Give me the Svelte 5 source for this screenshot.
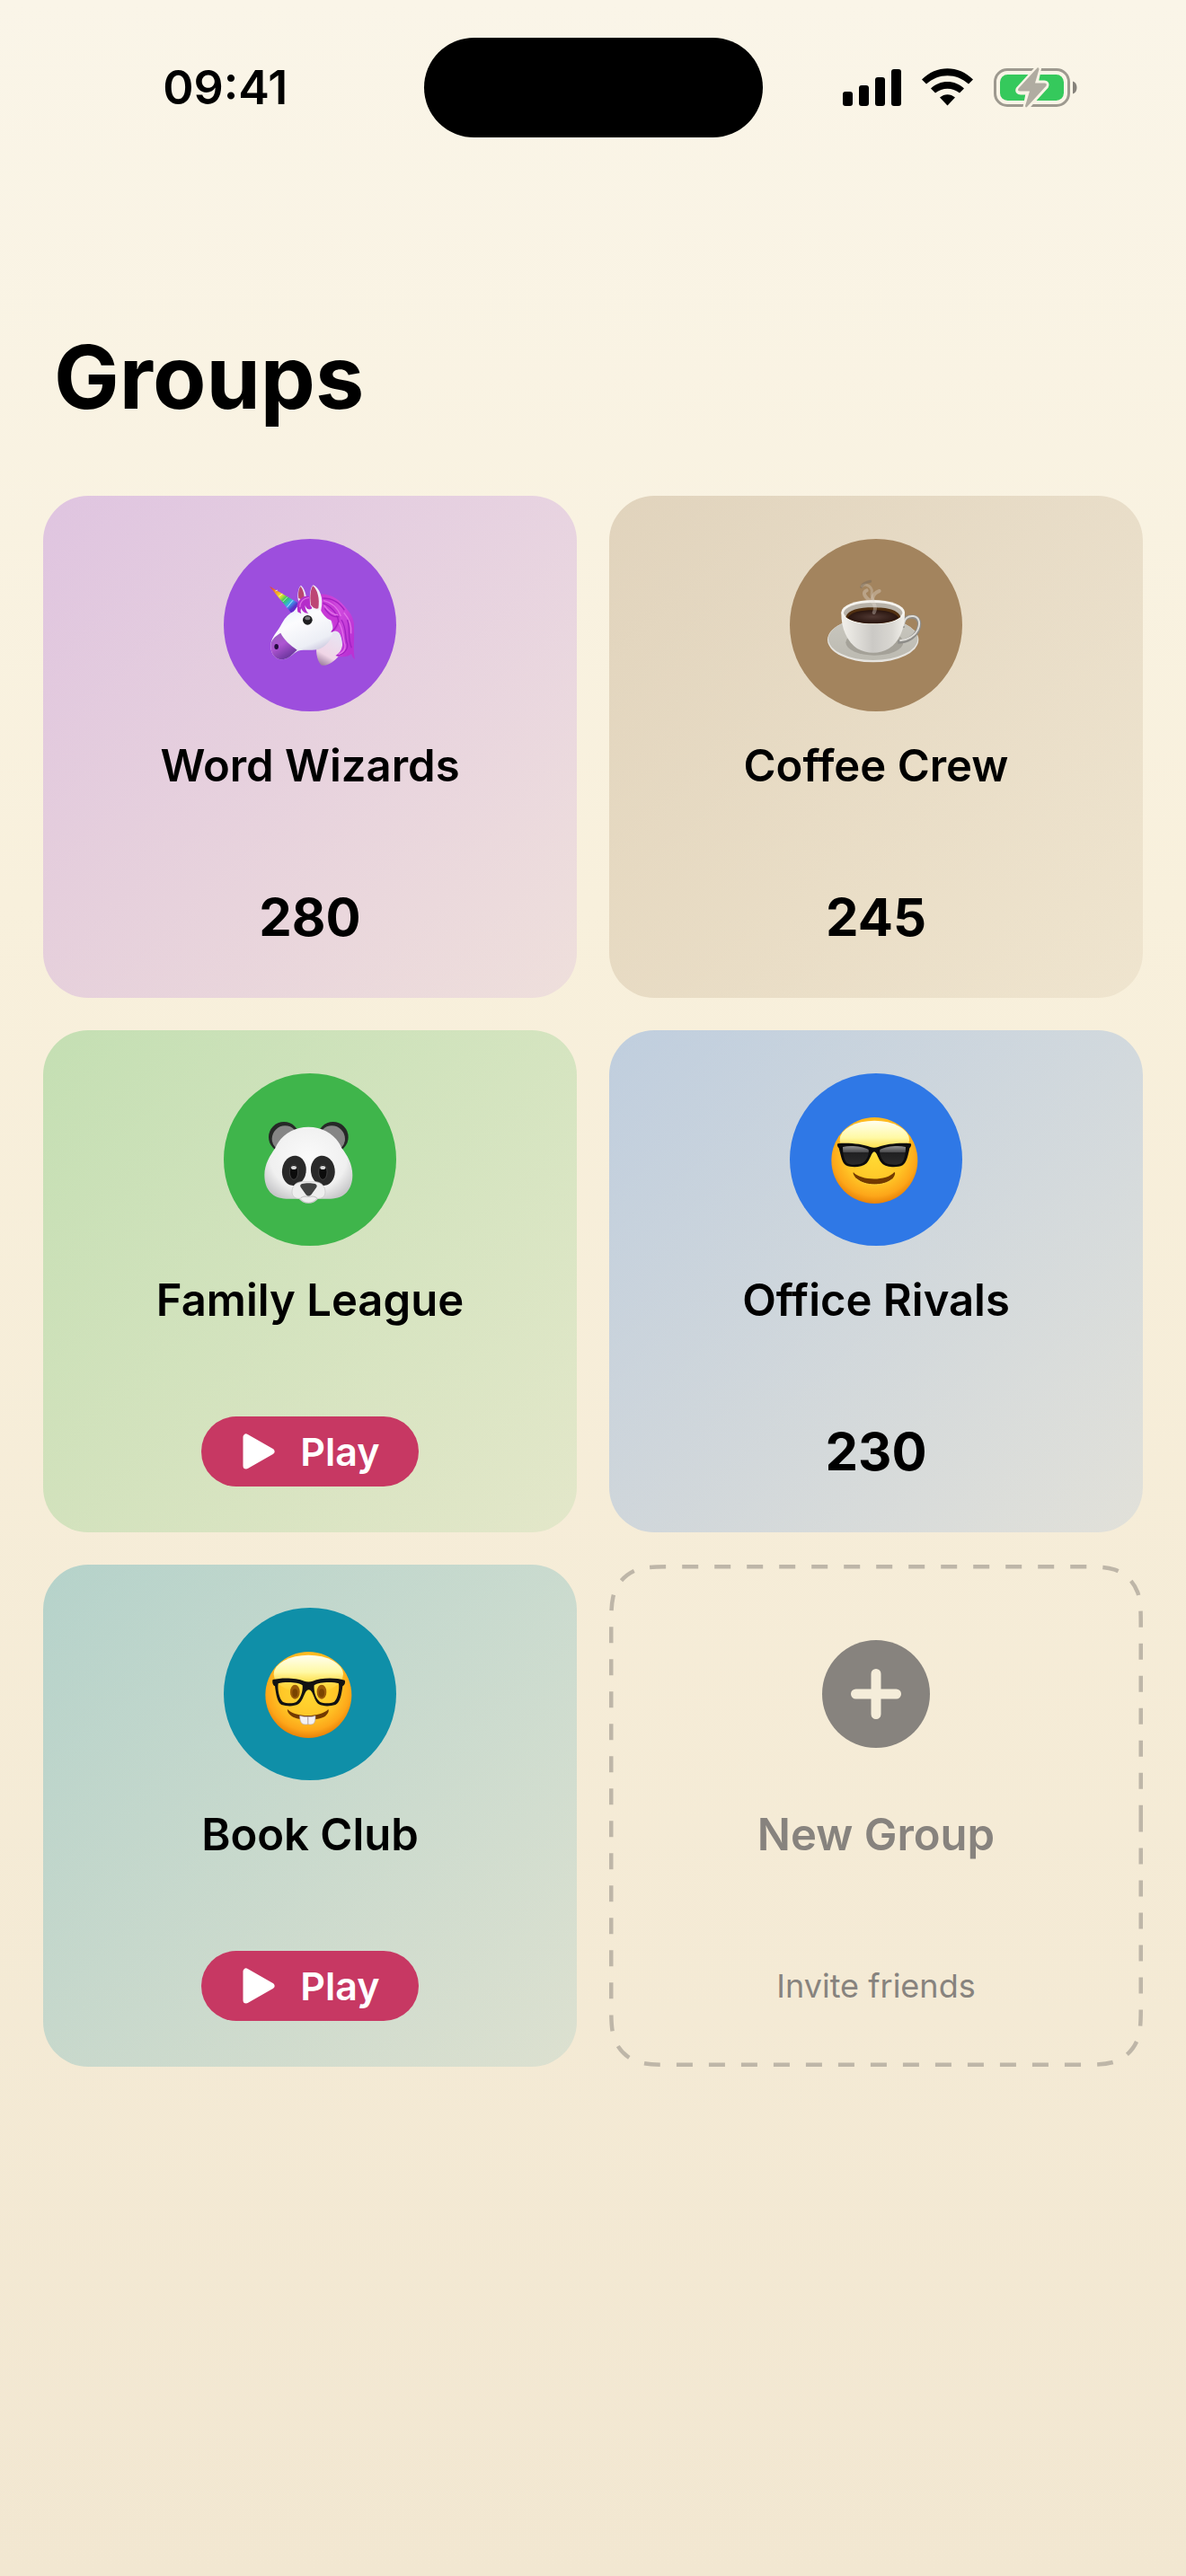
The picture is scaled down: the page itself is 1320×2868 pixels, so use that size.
<script lang="ts">
	interface Group {
		name: string;
		icon: 'unicorn' | 'coffee' | 'panda' | 'cool' | 'nerd';
		theme: string;
		score: number | null;
	}

	const groups: Group[] = [
		{ name: 'Word Wizards', icon: 'unicorn', theme: 'purple', score: 280 },
		{ name: 'Coffee Crew', icon: 'coffee', theme: 'brown', score: 245 },
		{ name: 'Family League', icon: 'panda', theme: 'green', score: null },
		{ name: 'Office Rivals', icon: 'cool', theme: 'blue', score: 230 },
		{ name: 'Book Club', icon: 'nerd', theme: 'teal', score: null }
	];

	// Rounded outline with continuous corners, starting at the middle of the right edge
	function outline(w: number, h: number, inset: number, r: number) {
		const l = inset;
		const t = inset;
		const ri = w - inset;
		const b = h - inset;
		const corner = (x: number, y: number, sx: number, sy: number, vertical: boolean) => {
			const pts = [
				[0, 1.5287], [0, 1.0885], [0, 0.8684], [0.0749, 0.6315],
				[0.1691, 0.3728], [0.3728, 0.1691], [0.6315, 0.0749],
				[0.8684, 0], [1.0885, 0], [1.5287, 0]
			];
			const list = vertical ? pts : pts.slice().reverse();
			const s = list.map(([px, py]) => `${x + sx * px * r} ${y + sy * py * r}`);
			return `L${s[0]}C${s.slice(1).join(' ')}`;
		};
		return (
			`M${ri} ${h / 2}` +
			corner(ri, b, -1, -1, true) +
			corner(l, b, 1, -1, false) +
			corner(l, t, 1, 1, true) +
			corner(ri, t, -1, 1, false) +
			'Z'
		);
	}
</script>

{#snippet face()}
	<circle cx="310" cy="321" r="144" fill="url(#face-edge)" />
	<ellipse cx="310" cy="252" rx="116" ry="64" fill="url(#face-shine)" />
{/snippet}

{#snippet avatar(icon: Group['icon'])}
	<svg class="emoji" viewBox="27 30 576 576" aria-hidden="true">
		{#if icon === 'unicorn'}
			<path d="M275 232C272 212 277 190 285 185C296 195 304 215 303 240L284 254Z" fill="#ece8f5" />
			<path d="M277 228C274 208 279 192 284 189C293 200 297 218 296 236Z" fill="#b9466f" />
			<path d="M338 385C332 412 342 444 354 452C372 456 396 440 412 420C428 402 426 370 412 340L385 330Z" fill="url(#uni-neck)" />
			<path d="M340 216C376 208 412 228 438 264C458 288 464 304 462 334C464 370 458 400 465 432C458 428 455 420 453 414C440 426 418 426 400 420C416 410 424 396 424 374C420 346 408 336 396 338L384 300L350 270Z" fill="url(#uni-mane)" />
			<path d="M250 278C266 258 290 244 320 246C356 250 388 286 392 330C392 356 380 380 350 396C326 405 300 398 275 404C258 412 244 434 216 433C194 430 182 406 184 382C188 356 206 340 216 322C226 302 234 290 250 278Z" fill="url(#uni-head)" />
			<path d="M217 344C228 366 248 384 272 401C258 412 244 434 216 433C194 430 182 406 184 382C188 362 204 352 217 344Z" fill="url(#uni-nose)" />
			<ellipse cx="203" cy="390" rx="7" ry="9" fill="#240b3d" />
			<path d="M180 188L274 243C272 260 264 272 252 277Z" fill="url(#uni-horn)" />
			<path d="M199 204L207 201M211 222L223 213M224 240L240 224M238 259L258 235" stroke="#fff" stroke-width="3" opacity=".65" />
			<path d="M274 274C268 242 284 218 312 222L330 236L320 264C306 268 304 262 298 252C300 266 304 274 310 278C296 280 288 270 286 262C282 268 284 274 286 280Z" fill="#b52dca" />
			<path d="M281 258C282 240 294 228 312 226" stroke="#d96be2" stroke-width="4" fill="none" />
			<path d="M348 224C380 220 410 258 416 292C418 316 404 340 384 342C396 326 398 310 388 302C374 300 360 286 352 270Z" fill="#c738d6" />
			<path d="M316 252C312 222 316 190 326 184C346 194 362 226 352 266C340 272 324 266 316 252Z" fill="#f3eff8" />
			<path d="M318 250C313 222 318 194 325 187C340 200 348 228 343 262C334 266 324 260 318 250Z" fill="#bd4574" />
			<path d="M358 244C388 256 408 282 410 306C404 322 396 334 388 340M364 262C382 288 396 292 412 290M358 228C390 228 412 240 430 268" stroke="#a41fc0" stroke-width="4" fill="none" />
			<path d="M360 236C388 242 408 262 418 288M362 252C380 276 392 284 408 284M428 276C448 300 454 318 452 346" stroke="#e070e8" stroke-width="4" fill="none" />
			<path d="M420 300C440 332 430 360 440 382C442 402 424 418 404 419M440 300C450 330 440 362 454 394" stroke="#a220c2" stroke-width="4" fill="none" />
			<path d="M412 310C430 340 424 366 432 384C434 398 424 410 410 416" stroke="#e36eeb" stroke-width="4" fill="none" />
			<circle cx="307" cy="301" r="16" fill="#1d1d1f" />
			<ellipse cx="307" cy="295" rx="9" ry="6" fill="#77777b" />
		{:else if icon === 'coffee'}
			<ellipse cx="305" cy="367" rx="152" ry="75" fill="#e6e4df" />
			<ellipse cx="305" cy="364" rx="149" ry="71" fill="url(#saucer)" />
			<ellipse cx="310" cy="376" rx="96" ry="43" fill="#8e8b82" opacity=".55" />
			<path d="M404 326C404 294 420 288 438 290C458 292 464 310 456 332C446 356 420 374 388 374" fill="none" stroke="#8e8d89" stroke-width="13" />
			<path d="M407 322C408 294 422 286 440 288C460 292 464 312 454 334C444 354 420 368 394 370" fill="none" stroke="#dedcd7" stroke-width="6" />
			<path d="M199 275C198 330 220 374 252 396C284 415 328 415 358 396C392 374 412 330 411 275Z" fill="url(#cup)" />
			<ellipse cx="305" cy="275" rx="106" ry="41" fill="#f6f4ef" />
			<ellipse cx="305" cy="277" rx="98" ry="34" fill="#b8b2a8" />
			<path d="M214 291C222 266 258 259 305 259C352 259 390 267 397 291C376 307 344 313 305 313C266 313 232 306 214 291Z" fill="#513011" />
			<path d="M220 294C232 274 264 268 305 268C348 268 378 275 391 294C370 306 340 312 305 312C268 312 240 306 220 294Z" fill="url(#brew)" />
			<g class="steam" fill="none" stroke-linecap="round">
				<path d="M308 276C322 252 298 242 304 226C308 212 320 206 326 204M302 240C276 226 268 208 284 202" stroke="#e4ddd5" stroke-width="12" opacity=".35" />
				<path d="M306 234C292 214 308 206 298 194C290 182 276 180 268 188" stroke="#d8cfc4" stroke-width="9" opacity=".35" />
				<path d="M266 190C272 178 284 174 296 172" stroke="#6d6359" stroke-width="9" opacity=".4" />
			</g>
		{:else if icon === 'panda'}
			<circle cx="228" cy="243" r="51" fill="#262827" />
			<circle cx="392" cy="243" r="51" fill="#262827" />
			<circle cx="232" cy="249" r="44" fill="#858585" />
			<circle cx="388" cy="249" r="44" fill="#858585" />
			<path d="M310 209C362 209 404 238 421 280C440 304 457 334 457 370C457 418 430 449 384 449H342C334 458 324 464 310 464C296 464 286 458 278 449H236C190 449 163 418 163 370C163 334 182 304 199 280C216 238 258 209 310 209Z" fill="url(#panda)" />
			<ellipse cx="262" cy="355" rx="40" ry="50" fill="#292929" transform="rotate(8 262 355)" />
			<ellipse cx="358" cy="355" rx="40" ry="50" fill="#292929" transform="rotate(-8 358 355)" />
			<ellipse cx="261" cy="360" rx="14" ry="25" fill="#0c0c0c" stroke="#555" stroke-width="2" />
			<ellipse cx="358" cy="360" rx="14" ry="25" fill="#0c0c0c" stroke="#555" stroke-width="2" />
			<ellipse cx="261" cy="345" rx="9" ry="6" fill="#d8d8d8" />
			<ellipse cx="358" cy="345" rx="9" ry="6" fill="#d8d8d8" />
			<path d="M286 392C266 394 255 408 255 426C255 442 268 450 282 448C290 458 300 462 310 462C320 462 330 458 338 448C354 450 366 442 366 426C366 408 354 394 334 392Z" fill="#eee" stroke="#c2c2c2" stroke-width="2" />
			<path d="M284 446C298 438 304 442 310 442C318 442 324 438 338 446" fill="none" stroke="#bcbcbc" stroke-width="3" />
			<path d="M288 399C300 396 320 396 332 399C338 401 340 406 336 412L320 434C314 441 306 441 301 434L285 412C281 406 282 401 288 399Z" fill="#414242" />
		{:else if icon === 'cool'}
			{@render face()}
			<path d="M240 361C262 388 350 392 376 360C382 362 376 376 368 384C342 408 276 408 250 382C242 374 236 362 240 361Z" fill="#733a00" />
			<path d="M250 382C276 408 342 408 368 384" stroke="#ffd23c" stroke-width="3" fill="none" />
			<path d="M187 265C222 261 268 266 296 276C304 279 314 279 322 276C350 266 396 261 431 265C434 268 432 275 427 280C422 306 416 330 404 337C384 347 348 344 335 331C322 318 318 292 309 292C300 292 296 318 283 331C268 344 234 347 214 337C202 330 198 306 191 280C186 275 184 268 187 265Z" fill="#0c0c0d" />
			<path d="M204 276C230 270 268 274 290 285C294 302 280 326 268 331C250 337 230 337 218 330C208 320 204 296 204 276Z" fill="url(#lens)" />
			<path d="M414 276C388 270 350 274 328 285C324 302 338 326 350 331C368 337 388 337 400 330C410 320 414 296 414 276Z" fill="url(#lens)" />
		{:else}
			{@render face()}
			<ellipse cx="265" cy="311" rx="16" ry="24" fill="#9b5c08" />
			<ellipse cx="354" cy="311" rx="16" ry="24" fill="#9b5c08" />
			<ellipse cx="265" cy="315" rx="9" ry="14" fill="#7a4300" />
			<ellipse cx="354" cy="315" rx="9" ry="14" fill="#7a4300" />
			<path d="M240 369C262 396 350 398 376 369C380 374 374 386 366 392C340 408 278 408 254 392C244 386 238 374 240 369Z" fill="#733a00" />
			<path d="M281 391C290 394 300 394 308 394V419C290 423 281 416 281 391Z" fill="#f4f1f4" stroke="#b7abb2" stroke-width="2" />
			<path d="M309 394C318 394 326 394 333 391C334 416 326 423 309 419Z" fill="#f4f1f4" stroke="#b7abb2" stroke-width="2" />
			<path fill-rule="evenodd" d="M191 270C222 262 270 264 296 275C304 278 316 278 324 275C350 264 398 262 431 272C434 278 432 288 424 292C420 322 416 346 400 354C382 360 358 360 344 352C328 342 326 304 311 304C296 304 294 342 276 352C262 360 238 360 220 354C206 346 202 322 198 292C190 288 188 276 191 270ZM209 283C206 302 212 334 224 344C238 350 258 350 270 344C284 334 292 308 290 289C274 276 224 278 209 283ZM411 283C396 278 346 276 329 289C327 308 334 334 348 344C362 350 382 350 396 344C408 334 414 302 411 283Z" fill="#121212" />
		{/if}
	</svg>
{/snippet}

<svg class="defs" width="0" height="0" aria-hidden="true">
	<defs>
		<radialGradient id="face-edge" cx=".5" cy=".42" r=".58">
			<stop offset="0" stop-color="#ffdc35" />
			<stop offset=".6" stop-color="#ffc526" />
			<stop offset=".85" stop-color="#fda619" />
			<stop offset="1" stop-color="#e98208" />
		</radialGradient>
		<linearGradient id="face-shine" x2="0" y2="1">
			<stop offset="0" stop-color="#fffef0" />
			<stop offset=".45" stop-color="#fff9a4" />
			<stop offset="1" stop-color="#ffe040" stop-opacity="0" />
		</linearGradient>
		<linearGradient id="lens" x2="0" y2="1">
			<stop offset="0" stop-color="#8f8f90" />
			<stop offset=".32" stop-color="#4c4c4e" />
			<stop offset=".36" stop-color="#202021" />
			<stop offset="1" stop-color="#2b2b2c" />
		</linearGradient>
		<radialGradient id="panda" cx=".5" cy=".4" r=".62">
			<stop offset="0" stop-color="#fafafa" />
			<stop offset=".7" stop-color="#f0f0f0" />
			<stop offset="1" stop-color="#c6c6c8" />
		</radialGradient>
		<linearGradient id="saucer" x2="0" y2="1">
			<stop offset="0" stop-color="#c9c7bf" />
			<stop offset="1" stop-color="#bcbab1" />
		</linearGradient>
		<linearGradient id="cup">
			<stop offset="0" stop-color="#f3f1ec" />
			<stop offset=".5" stop-color="#cbc9c5" />
			<stop offset=".8" stop-color="#d9d7d2" />
			<stop offset="1" stop-color="#f2f0eb" />
		</linearGradient>
		<radialGradient id="brew">
			<stop offset="0" stop-color="#513933" />
			<stop offset="1" stop-color="#29150f" />
		</radialGradient>
		<linearGradient id="uni-head" x1=".2" y1="0" x2=".7" y2="1">
			<stop offset="0" stop-color="#e6f4fb" />
			<stop offset=".35" stop-color="#fcfcfe" />
			<stop offset=".75" stop-color="#eceef5" />
			<stop offset="1" stop-color="#b9b2d2" />
		</linearGradient>
		<linearGradient id="uni-neck" x1=".2" y1="1" x2=".6" y2="0">
			<stop offset="0" stop-color="#9b7d9d" />
			<stop offset=".3" stop-color="#f0d5e6" />
			<stop offset="1" stop-color="#e8e5f3" />
		</linearGradient>
		<linearGradient id="uni-mane" x2="1" y2=".6">
			<stop offset="0" stop-color="#c436d2" />
			<stop offset=".55" stop-color="#d04ade" />
			<stop offset="1" stop-color="#bb32d4" />
		</linearGradient>
		<linearGradient id="uni-nose" x2=".6" y2="1">
			<stop offset="0" stop-color="#9461ba" />
			<stop offset=".5" stop-color="#ae55d2" />
			<stop offset="1" stop-color="#67349a" />
		</linearGradient>
		<linearGradient id="uni-horn" x2="1" y2="1">
			<stop offset=".04" stop-color="#e04030" />
			<stop offset=".25" stop-color="#f5a623" />
			<stop offset=".38" stop-color="#e8e530" />
			<stop offset=".52" stop-color="#35c759" />
			<stop offset=".68" stop-color="#38aef0" />
			<stop offset=".82" stop-color="#5a32c8" />
			<stop offset="1" stop-color="#8a1fd0" />
		</linearGradient>
	</defs>
</svg>

<div class="screen">
	<header class="status-bar">
		<time class="clock" datetime="09:41">09:41</time>
		<div class="island"></div>
		<svg class="status-icons" viewBox="0 0 264 48" role="img" aria-label="Signal, Wi-Fi and battery">
			<g>
				<rect x="1" y="28" width="11" height="16" rx="3" />
				<rect x="19" y="21" width="11" height="23" rx="3" />
				<rect x="37" y="12" width="11" height="32" rx="3" />
				<rect x="55" y="3" width="11" height="41" rx="3" />
			</g>
			<g>
				<path d="M89 14.500C105-2 130-2 146 14.500L141 19.500C127.500 7 107.500 7 94 19.500Z" />
				<path d="M99 24.500C109 14.500 126 14.500 136 24.500L131 29.500C123 23 112 23 104 29.500Z" />
				<path d="M109 34.500C114 30 121 30 126 34.500L117.500 43.500Z" />
			</g>
			<rect x="170.500" y="3.500" width="82" height="40" rx="13.500" fill="none" stroke="#9d998f" stroke-width="3" />
			<path d="M257 16.500C263 18 263 29 257 30.500Z" fill="#86827b" />
			<rect x="176" y="9" width="71" height="29" rx="8.500" fill="#35c95c" />
			<path d="M218.500 2L197 25.500Q196 28 199 28H208.500L205 45.500L226.500 22Q228 19 225 19H215Z" fill="#b0aca1" stroke="#f9f4e6" stroke-width="7" stroke-linejoin="round" />
			<path d="M217.500 1.500L196.500 24.500Q195 27.500 198 27.500H209L204 44Q204.500 46.500 206.500 44.500L227.500 21.500Q228.500 18.500 225.500 18.500H215L219.500 3Q219 .5 217.500 1.500Z" fill="#b0aca1" />
		</svg>
	</header>

	<main>
		<h1>Groups</h1>
		<div class="grid">
			{#each groups as group}
				<article class="card {group.theme}">
					<div class="avatar">{@render avatar(group.icon)}</div>
					<h2>{group.name}</h2>
					<div class="card-footer">
						{#if group.score !== null}
							<span class="score">{group.score}</span>
						{:else}
							<button class="play-btn">
								<svg viewBox="0 0 36 40" aria-hidden="true">
									<path d="M4 4V36L32 20Z" stroke="#fff" stroke-width="7" stroke-linejoin="round" fill="#fff" />
								</svg>
								Play
							</button>
						{/if}
					</div>
				</article>
			{/each}

			<button class="card new-group">
				<svg class="outline" viewBox="0 0 594 559" preserveAspectRatio="none" aria-hidden="true">
					<path d={outline(594, 559, 2.25, 45.75)} />
				</svg>
				<span class="plus-wrap">
					<svg class="plus" viewBox="0 0 120 120" aria-hidden="true">
						<circle cx="60" cy="60" r="60" fill="#87837e" />
						<path d="M60 37.500V82.500M37.500 60H82.500" stroke="#f5edda" stroke-width="11" stroke-linecap="round" />
					</svg>
				</span>
				<span class="new-title">New Group</span>
				<span class="card-footer invite">Invite friends</span>
			</button>
		</div>
	</main>
</div>

<style>
	:global(body) {
		margin: 0;
	}

	.screen {
		min-height: 100vh;
		box-sizing: border-box;
		background: linear-gradient(#faf5e8, #f8f0dc 35%, #f2e7d1);
		color: #000;
		font-family: Inter, 'Liberation Sans', sans-serif;
	}

	.defs {
		position: absolute;
	}

	.status-bar {
		display: grid;
		grid-template-columns: 1fr auto 1fr;
		align-items: center;
		padding: 42px 30px 0;
	}

	.clock {
		justify-self: center;
		font-size: 52px;
		line-height: 64px;
		font-weight: 600;
	}

	.island {
		width: 377px;
		height: 111px;
		border-radius: 56px;
		background: #000;
	}

	.status-icons {
		justify-self: center;
		width: 264px;
		height: 48px;
	}

	main {
		padding: 205px 48px 48px;
	}

	h1 {
		margin: 0 12px 70px;
		font-size: 97px;
		line-height: 124px;
		font-weight: 700;
	}

	.grid {
		display: grid;
		grid-template-columns: 1fr 1fr;
		gap: 36px;
	}

	.card {
		display: flex;
		flex-direction: column;
		align-items: center;
		box-sizing: border-box;
		min-height: 559px;
		padding: 48px;
		border-radius: 50px;
	}

	.avatar {
		width: 192px;
		height: 192px;
		border-radius: 50%;
	}

	.emoji {
		display: block;
		width: 100%;
		height: 100%;
	}

	.steam {
		filter: blur(1px);
	}

	.purple {
		background: linear-gradient(135deg, rgba(157, 78, 221, 0.28), rgba(157, 78, 221, 0.1));
	}

	.purple .avatar {
		background: #9d4edd;
	}

	.brown {
		background: linear-gradient(135deg, rgba(163, 132, 94, 0.28), rgba(163, 132, 94, 0.1));
	}

	.brown .avatar {
		background: #a3845e;
	}

	.green {
		background: linear-gradient(135deg, rgba(63, 181, 75, 0.28), rgba(63, 181, 75, 0.1));
	}

	.green .avatar {
		background: #3fb54b;
	}

	.blue {
		background: linear-gradient(135deg, rgba(47, 120, 230, 0.28), rgba(47, 120, 230, 0.1));
	}

	.blue .avatar {
		background: #2f78e6;
	}

	.teal {
		background: linear-gradient(135deg, rgba(15, 143, 168, 0.28), rgba(15, 143, 168, 0.1));
	}

	.teal .avatar {
		background: #0f8fa8;
	}

	h2,
	.new-title {
		margin: 31px 0 0;
		font-size: 49px;
		line-height: 60px;
		font-weight: 600;
	}

	.card-footer {
		display: flex;
		align-items: center;
		justify-content: center;
		height: 84px;
		margin-top: auto;
	}

	.score {
		font-size: 58px;
		line-height: 72px;
		font-weight: 700;
	}

	.play-btn {
		display: flex;
		align-items: center;
		gap: 28px;
		height: 78px;
		padding: 0 43px 0 46px;
		border: 0;
		border-radius: 39px;
		background: #c73863;
		color: #fff;
		font-family: inherit;
		font-size: 43px;
		font-weight: 600;
		cursor: pointer;
	}

	.play-btn svg {
		width: 36px;
		height: 40px;
	}

	.new-group {
		position: relative;
		border: 0;
		background: none;
		color: #87837e;
		font-family: inherit;
		cursor: pointer;
	}

	.outline {
		position: absolute;
		inset: 0;
		width: 100%;
		height: 100%;
	}

	.outline path {
		fill: none;
		stroke: #beb6a8;
		stroke-width: 4.5;
		stroke-dasharray: 18 18;
	}

	.plus-wrap {
		display: flex;
		align-items: center;
		height: 192px;
	}

	.plus {
		width: 120px;
		height: 120px;
	}

	.invite {
		font-size: 36px;
		line-height: 44px;
	}
</style>
